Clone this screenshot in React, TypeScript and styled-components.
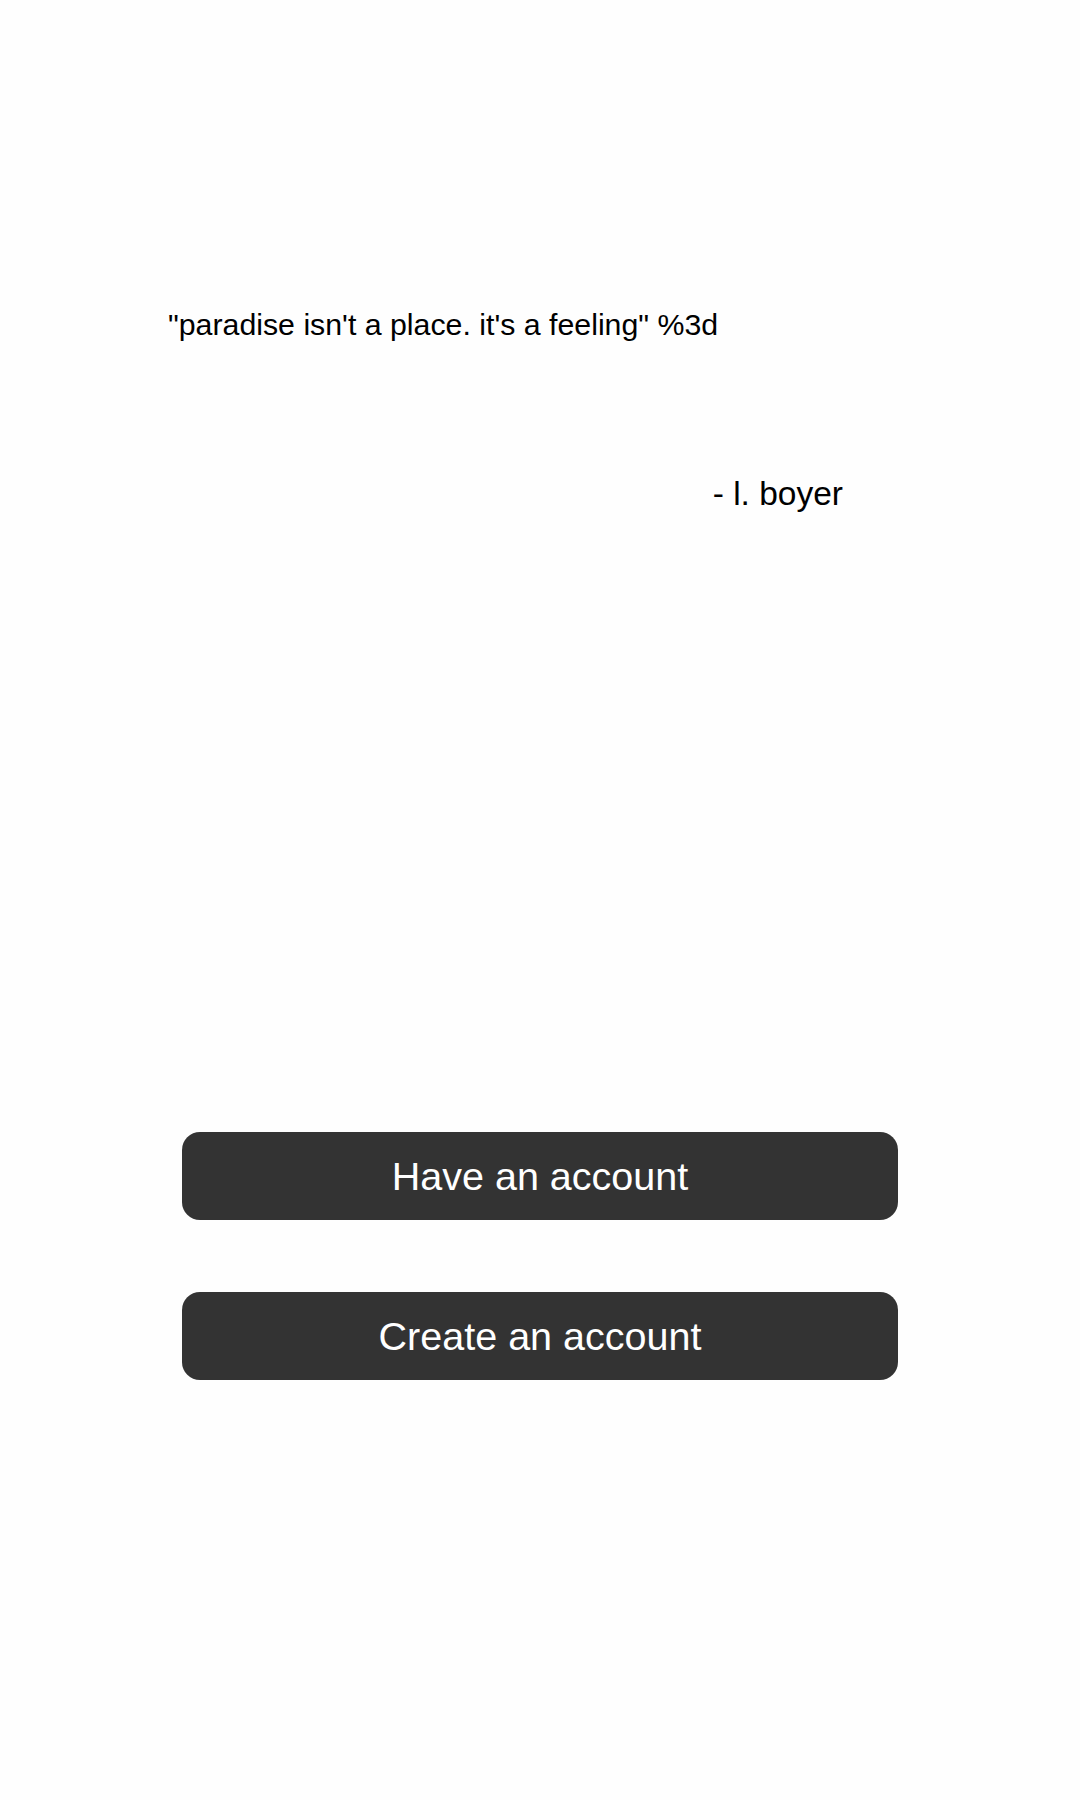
import React from "react";
import styled, { createGlobalStyle } from "styled-components";

const Global = createGlobalStyle`
  html, body {
    margin: 0;
    padding: 0;
    background: #fefefe;
  }
  body {
    font-family: "Liberation Sans", Arial, sans-serif;
  }
`;

const Page = styled.main`
  min-height: 1800px;
  display: flex;
  flex-direction: column;
  padding-top: 308px;
  box-sizing: border-box;
`;

const QuoteBlock = styled.section`
  display: flex;
  flex-direction: column;
  padding: 0 237px 0 168px;
`;

const QuoteText = styled.p`
  margin: 0;
  font-size: 30.3px;
  color: #000;
`;

const Author = styled.p`
  margin: 133px 0 0 0;
  align-self: flex-end;
  font-size: 33.5px;
  color: #000;
`;

const Actions = styled.nav`
  display: flex;
  flex-direction: column;
  align-items: center;
  gap: 72px;
  margin-top: 619px;
`;

const Button = styled.button`
  width: 716px;
  height: 88px;
  border: none;
  border-radius: 18px;
  background: #333333;
  color: #ffffff;
  font-family: "Liberation Sans", Arial, sans-serif;
  font-size: 39.5px;
  cursor: pointer;
`;

export default function App() {
  return (
    <>
      <Global />
      <Page>
        <QuoteBlock>
          <QuoteText>"paradise isn't a place. it's a feeling" %3d</QuoteText>
          <Author>- l. boyer</Author>
        </QuoteBlock>
        <Actions>
          <Button>Have an account</Button>
          <Button>Create an account</Button>
        </Actions>
      </Page>
    </>
  );
}
